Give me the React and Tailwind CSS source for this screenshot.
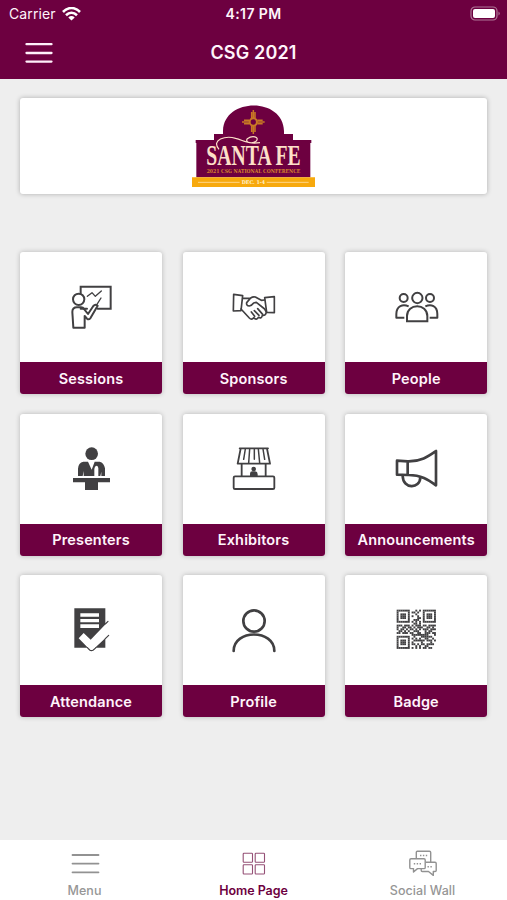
const INK = "#414042";
const WINE = "#6d0040";

const line = {
  fill: "none",
  stroke: INK,
  strokeWidth: 6,
  strokeLinejoin: "round",
  strokeLinecap: "round",
};

const SessionsIcon = () => (
  <g {...line}>
    <path d="M92 70V50H182V116H143M92 116h19" strokeLinejoin="miter" />
    <circle cx="86" cy="88" r="17" />
    <path d="M70 173L67 126Q67 112 81 112H93Q99 112 103 118L114 132L130 108Q136 101 143 107L121 145Q116 150 111 146L104 138V173Z" strokeWidth="6" />
    <path d="M112 79L126 68L136 79L154 63M153 84L139 106" strokeWidth="4" />
  </g>
);

const SponsorsIcon = () => (
  <g {...line} strokeWidth="5">
    <path d="M56 73L83 77L78 122L55 123ZM178 80L149 83L155 127L178 128Z" />
    <path d="M83 85H106M78 117L103 144Q110 151 116 143Q125 152 130 142Q140 147 142 136Q152 138 154 126M149 90L139 91L121 81Q114 79 107 84L95 98Q93 107 103 108Q110 107 116 99L124 97L149 117L154 126" />
    <path d="M109 126L119 139M118 122L132 136M128 116L143 133" />
  </g>
);

const PeopleIcon = () => (
  <g {...line}>
    <circle cx="127" cy="84" r="15.5" />
    <path d="M96 154V138C96 99 157 99 157 138V154Z" strokeLinejoin="miter" />
    <circle cx="86" cy="84" r="12" strokeWidth="6" />
    <circle cx="165" cy="84" r="12" strokeWidth="6" />
    <path d="M88 143H64V132C64 107 84 101 101 109M164 143H187V132C187 107 168 101 151 109" strokeWidth="6" strokeLinecap="butt" />
  </g>
);

const PresentersIcon = () => (
  <g fill={INK}>
    <circle cx="125" cy="70" r="19" />
    <path d="M84 137V115Q85 97 100 94H114L125 118L134 94H149Q162 97 165 114V137H154V124L151 137H145V113Q144 106 139 106Q134 107 133 116V137H101V122L98 137Z" />
    <path d="M69 143H180V156H144V179H105V156H69Z" />
  </g>
);

const ExhibitorsIcon = () => (
  <g {...line} strokeWidth="5.5">
    <path d="M74 54H159M77 55L68 100H165L156 55M80 101V137M152 101V137" />
    <path d="M91 56L86 87M104 56L101 98M118 56V87M130 56L134 98M144 56L149 87" strokeWidth="4.5" />
    <rect x="56" y="138" width="122" height="38" rx="4" />
    <circle cx="116" cy="116" r="7" fill={INK} stroke="none" />
    <path d="M105 137V130Q105 123 112 123H120Q128 124 128 131V137Z" fill={INK} stroke="none" />
  </g>
);

const AnnouncementsIcon = () => (
  <g {...line} strokeWidth="8" strokeLinejoin="miter" strokeLinecap="butt">
    <path d="M66 91L98 93C138 94 160 78 183 62V165C160 148 138 133 98 134L66 133ZM98 92V135" strokeLinejoin="round" />
    <path d="M83 137C84 177 135 177 136 141" />
  </g>
);

const AttendanceIcon = () => (
  <g>
    <path d="M73 54H166V172H73Z" fill={INK} />
    <path d="M91 69H147V79H91ZM91 86H147V96H91ZM91 102H147V113H91Z" fill="#fff" />
    <path d="M86 144L101 128L122 148L176 92V134L124 183Z" fill="#fff" />
    <path d="M166 101L174 93M166 145L176 135M112 172L119 179Q124 183 130 179L138 172" {...line} strokeWidth="3.5" />
  </g>
);

const ProfileIcon = () => (
  <g {...line} strokeWidth="8">
    <circle cx="117" cy="92" r="32" />
    <path d="M56 182C56 116 178 116 178 182" />
  </g>
);

const QR_ROWS = [
  "111111100010101111111",
  "100000101101001000001",
  "101110100010001011101",
  "101110101001001011101",
  "101110100001101011101",
  "100000100111001000001",
  "111111101010101111111",
  "000000000110100000000",
  "111011101011101101111",
  "100110110101110011010",
  "101101011010101110111",
  "011010100111000101100",
  "110111011001100111011",
  "000000001111111110001",
  "111111100100011111100",
  "100000101010100110010",
  "101110100111111011101",
  "101110101000010000100",
  "101110101101011011110",
  "100000100010100110000",
  "111111101010101101100",
];

const BadgeIcon = () => (
  <g fill={INK}>
    {QR_ROWS.flatMap((row, y) =>
      [...row].map((cell, x) =>
        cell === "1" ? (
          <rect key={`${x}-${y}`} x={65 + x * 5.6} y={58 + y * 5.6} width="5.7" height="5.7" />
        ) : null
      )
    )}
  </g>
);

const TILES = [
  { label: "Sessions", Icon: SessionsIcon, box: "-90 -54 426 330" },
  { label: "Sponsors", Icon: SponsorsIcon, box: "-96 -54 426 330" },
  { label: "People", Icon: PeopleIcon, box: "-90 -54 426 330" },
  { label: "Presenters", Icon: PresentersIcon, box: "-90 -49 426 330" },
  { label: "Exhibitors", Icon: ExhibitorsIcon, box: "-96 -49 426 330" },
  { label: "Announcements", Icon: AnnouncementsIcon, box: "-90 -49 426 330" },
  { label: "Attendance", Icon: AttendanceIcon, box: "-90 -46 426 330" },
  { label: "Profile", Icon: ProfileIcon, box: "-96 -46 426 330" },
  { label: "Badge", Icon: BadgeIcon, box: "-90 -46 426 330" },
];

function Tile({ label, Icon, box }) {
  return (
    <button className="flex h-[142px] flex-col overflow-hidden rounded-[3px] bg-white shadow-[0_0_5px_rgba(0,0,0,0.24)]">
      <svg viewBox={box} className="h-[110px] w-full">
        <Icon />
      </svg>
      <span className="flex h-8 w-full items-center justify-center bg-[#6d0040] pt-px text-[14.5px] font-semibold tracking-[0.15px] text-[#fff4fb]">
        {label}
      </span>
    </button>
  );
}

function Logo() {
  return (
    <svg viewBox="-478 9 1401 288" className="h-24 w-full">
      <path d="M51 247V144H49V135H104V117H131V107C134 8 311 5 314 108V117H341V135H396V144H393V247Z" fill={WINE} />
      <g fill="none" stroke="#c87825">
        <circle cx="222" cy="81" r="11" strokeWidth="6" />
        <path d="M217 69V51M222 69V45M227 69V51M217 93V111M222 93V117M227 93V111M210 76H194M210 81H188M210 86H194M234 76H250M234 81H256M234 86H250" strokeWidth="4.5" />
      </g>
      <text x="81" y="210" fontSize="90" fontFamily="'Liberation Serif', serif" fontWeight="700" fill="#fde0c9" textLength="283" lengthAdjust="spacingAndGlyphs">SANTA FE</text>
      <path d="M119 163C94 134 139 121 169 130C195 137 215 151 231 138C241 125 219 120 204 131C195 144 220 146 242 143" fill="none" stroke="#fde0c9" strokeWidth="3.5" />
      <text x="82" y="235" fontSize="16" fontFamily="'DejaVu Serif', serif" fontWeight="700" fill="#d6822d" textLength="281" lengthAdjust="spacingAndGlyphs">2021 CSG NATIONAL CONFERENCE</text>
      <path d="M38 247H407V276H38Z" fill="#f7a90d" />
      <path d="M56 262H181M262 262H388" stroke="#ffe0a0" strokeWidth="2.5" />
      <text x="187" y="267" fontSize="15" fontFamily="'DejaVu Serif', serif" fontWeight="700" fill="#fff2d0" textLength="70" lengthAdjust="spacingAndGlyphs">DEC. 1-4</text>
    </svg>
  );
}

export default function App() {
  return (
    <div className="flex h-[900px] w-[507px] flex-col overflow-hidden bg-[#eeeeee] font-[Inter,sans-serif]">
      <header className="h-[79px] shrink-0 bg-[#6d0040] text-[#fff4fb]">
        <div className="grid h-[27px] grid-cols-3 items-center">
          <div className="flex items-center gap-1.5 pl-[9px] text-[14px] tracking-[0.1px]">
            Carrier
            <svg viewBox="0 0 19 14" className="h-3.5 w-[19px]" fill="none" stroke="#fff" strokeWidth="2.6">
              <path d="M1 5C6-.3 13-.3 18 5M4 8.2C7.3 5 11.7 5 15 8.2" />
              <path d="M6.3 10.4Q9.5 7.6 12.7 10.4L9.5 13.6Z" fill="#fff" stroke="none" />
            </svg>
          </div>
          <div className="text-center text-[14px] font-semibold tracking-[0.4px]">4:17 PM</div>
          <svg viewBox="0 0 31 15" className="mr-1.5 h-[15px] w-[31px] justify-self-end">
            <rect x="1" y="1" width="26" height="13" rx="4" fill="none" stroke="#b07797" strokeWidth="1.2" />
            <rect x="3" y="3" width="22" height="9" rx="2" fill="#fff" />
            <path d="M28.5 5.5Q31 7.5 28.5 9.5Z" fill="#b07797" />
          </svg>
        </div>
        <div className="grid h-[51px] grid-cols-[80px_1fr_80px] items-center">
          <svg viewBox="0 0 28 22" className="ml-[25px] h-[22px] w-7" stroke="#fff0fa" strokeWidth="2.3" strokeLinecap="round">
            <path d="M1.5 2.2H26.5M1.5 11H26.5M1.5 19.6H26.5" />
          </svg>
          <h1 className="text-center text-[18px] font-semibold tracking-[0.15px]">CSG 2021</h1>
        </div>
      </header>

      <main className="flex-1 pl-5 pt-[19px]">
        <div className="h-24 w-[467px] overflow-hidden rounded-[3px] bg-white shadow-[0_0_5px_rgba(0,0,0,0.28)]">
          <Logo />
        </div>
        <div className="mt-[58px] grid grid-cols-[142px_142px_142px] gap-x-[20.6px] gap-y-[19.5px]">
          {TILES.map((tile) => (
            <Tile key={tile.label} {...tile} />
          ))}
        </div>
      </main>

      <nav className="grid h-[60px] shrink-0 grid-cols-3 bg-white text-[12.5px] text-[#969696]">
        <a className="flex flex-col items-center pt-2 font-medium tracking-[0.1px]">
          <svg viewBox="0 0 32 32" className="h-8 w-8" stroke="#929292" strokeWidth="1.8" strokeLinecap="round">
            <path d="M3.5 7H29.5M3.5 15.6H29.5M3.5 24.3H29.5" />
          </svg>
          <span className="leading-[22px]">Menu</span>
        </a>
        <a className="flex flex-col items-center pt-2 font-semibold tracking-[-0.05px] text-[#6d0040]">
          <svg viewBox="0 0 32 32" className="h-8 w-8" fill="none" stroke="#955076" strokeWidth="1.1">
            <rect x="5.2" y="5.2" width="9.3" height="9" rx="0.8" />
            <rect x="17.2" y="5.2" width="9.3" height="9" rx="0.8" />
            <rect x="5.2" y="16.8" width="9.3" height="9.2" rx="0.8" />
            <rect x="17.2" y="16.8" width="9.3" height="9.2" rx="0.8" />
          </svg>
          <span className="leading-[22px]">Home Page</span>
        </a>
        <a className="flex flex-col items-center pt-2 font-medium tracking-[0.05px]">
          <svg viewBox="0 0 32 32" className="h-8 w-8" fill="none" stroke="#929292" strokeWidth="1.4" strokeLinejoin="round">
            <path d="M9.3 10.2V4.2Q9.3 3.2 10.3 3.2H22.5Q23.7 3.2 23.7 4.4V13.7M18.5 14.2H28Q29.2 14.2 29.2 15.4V22.4Q29.2 23.5 28 23.5H26.3V27.4L21.5 23.5H15.3Q14.2 23.5 14.2 22.2V20.7" />
            <path d="M4 10.7H17Q18.2 10.7 18.2 11.9V19.4Q18.2 20.6 17 20.6H10.5L6.5 24V20.6H4Q2.8 20.6 2.8 19.4V11.9Q2.8 10.7 4 10.7Z" />
            <path d="M13 7.5H20.5M6.8 15.7H14.5M20.5 18.8H26" strokeDasharray="1.4 1.5" strokeWidth="1.5" />
          </svg>
          <span className="leading-[22px]">Social Wall</span>
        </a>
      </nav>
    </div>
  );
}
